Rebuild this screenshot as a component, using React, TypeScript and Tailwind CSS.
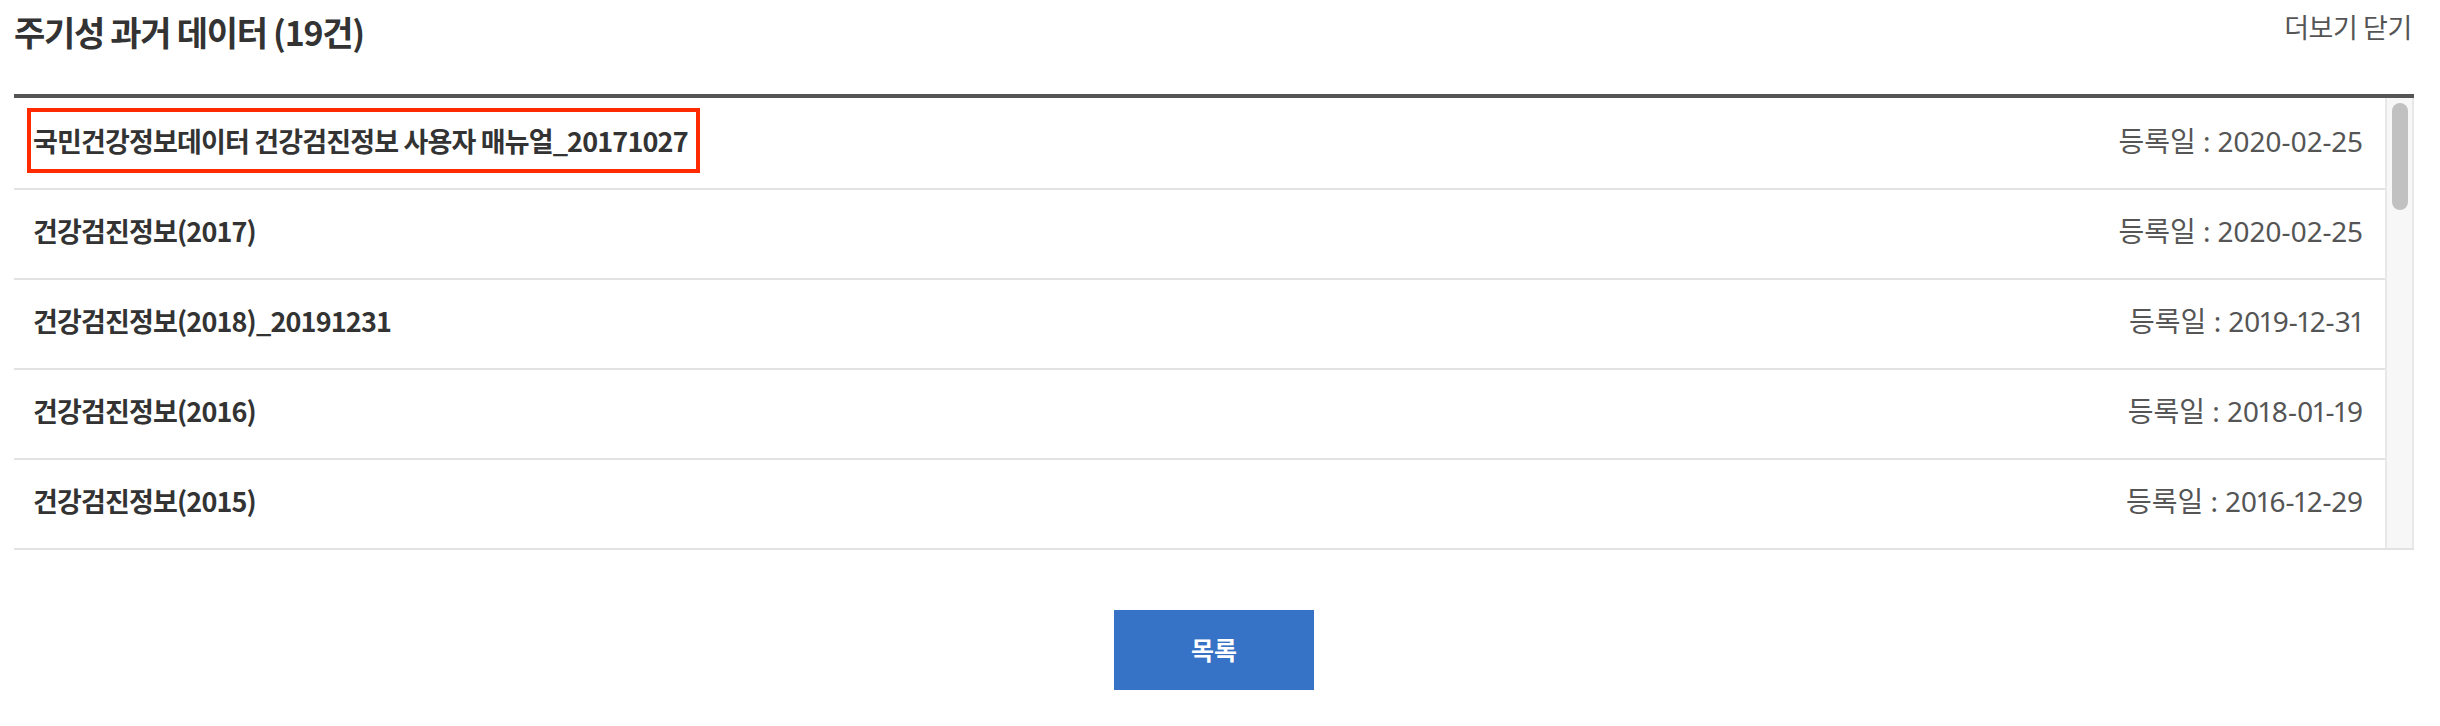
import React from "react";

type Row = { title: string; date: string };

const rows: Row[] = [
  { title: "국민건강정보데이터 건강검진정보 사용자 매뉴얼_20171027", date: "2020-02-25" },
  { title: "건강검진정보(2017)", date: "2020-02-25" },
  { title: "건강검진정보(2018)_20191231", date: "2019-12-31" },
  { title: "건강검진정보(2016)", date: "2018-01-19" },
  { title: "건강검진정보(2015)", date: "2016-12-29" },
];

export default function App() {
  return (
    <div className="min-h-[726px] w-full bg-white font-['Noto_Sans_CJK_KR',sans-serif]">
      <div className="ml-[14px] w-[2400px]">
        {/* Header */}
        <div className="flex h-[62px] items-center justify-between">
          <h2 className="text-[34px] font-bold tracking-[-1.3px] text-[#333]">
            주기성 과거 데이터 (19건)
          </h2>
          <button className="mb-[8px] mr-[2px] text-[27px] tracking-[-0.4px] text-[#555]">더보기 닫기</button>
        </div>

        {/* List with its scroll gutter */}
        <div className="mt-[32px] flex border-t-4 border-b-2 border-t-[#555] border-b-[#e2e2e2]">
          <ul className="flex-1 pt-[2px]">
            {rows.map((row, i) => (
              <li
                key={i}
                className="flex h-[90px] items-center justify-between border-b-2 border-[#e2e2e2] pb-[6px] pl-[19px] pr-[22px] last:h-[88px] last:border-b-0"
              >
                <span className="relative text-[27px] font-bold tracking-[-0.85px] text-[#333]">
                  {row.title}
                  {i === 0 && (
                    <span className="absolute -top-[13px] -bottom-[12px] -left-[6px] -right-[12px] border-4 border-[#ff2a00]" />
                  )}
                </span>
                <span className="font-['Noto_Sans','Noto_Sans_CJK_KR',sans-serif] text-[28px] text-[#555] proportional-nums">
                  등록일 : {row.date}
                </span>
              </li>
            ))}
          </ul>
          <div className="w-[29px] border-x-2 border-[#e8e8e8] bg-[#f7f7f7] pt-[5px]">
            <div className="ml-[5px] h-[107px] w-[16px] rounded-full bg-[#c1c1c1]" />
          </div>
        </div>

        {/* Footer button */}
        <div className="mt-[60px] flex justify-center">
          <button className="h-[80px] w-[200px] bg-[#3672c6] text-[25px] font-bold text-white">목록</button>
        </div>
      </div>
    </div>
  );
}
